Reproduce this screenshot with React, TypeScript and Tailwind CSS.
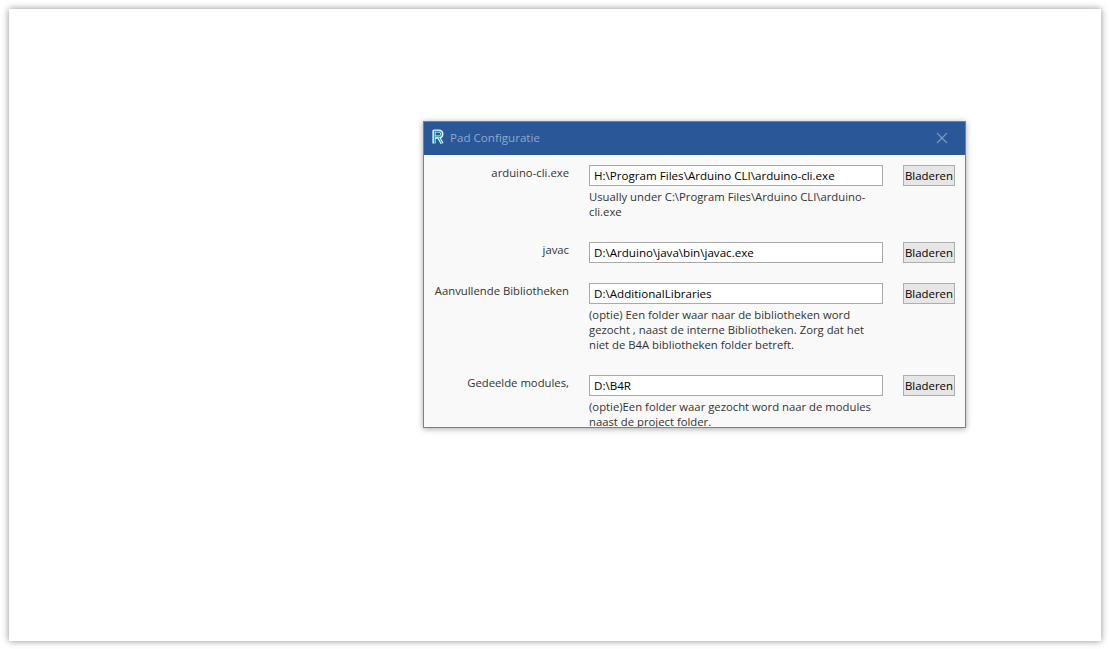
import React from 'react';

const rows = [
    {
        label: 'arduino-cli.exe',
        value: 'H:\\Program Files\\Arduino CLI\\arduino-cli.exe',
        hint: ['Usually under C:\\Program Files\\Arduino CLI\\arduino-', 'cli.exe'],
        height: 'h-[77px]',
    },
    { label: 'javac', value: 'D:\\Arduino\\java\\bin\\javac.exe', hint: [], height: 'h-[41px]' },
    {
        label: 'Aanvullende Bibliotheken',
        value: 'D:\\AdditionalLibraries',
        hint: [
            '(optie) Een folder waar naar de bibliotheken word',
            'gezocht , naast de interne Bibliotheken. Zorg dat het',
            'niet de B4A bibliotheken folder betreft.',
        ],
        height: 'h-[92px]',
    },
    {
        label: 'Gedeelde modules,',
        value: 'D:\\B4R',
        hint: ['(optie)Een folder waar gezocht word naar de modules', 'naast de project folder.'],
        height: 'h-[60px]',
    },
];

const Logo = () => (
    <svg width="14" height="18" viewBox="0 0 14 18" fill="none" className="mb-[1px]">
        <path d="M3 15.500V3h4.500c2.200 0 3.400 1.300 3.400 3.100S9.700 9.200 7.500 9.200H3M7.500 9.200l3.700 6.300" stroke="#e4f2f4" strokeWidth="3.200" strokeLinejoin="round" />
        <path d="M3.400 15.500V3.400h4.100c2 0 3 1 3 2.700s-1 2.700-3 2.700H3.400M7.800 9.500l3.300 6" stroke="#2a9db0" strokeWidth="1.100" />
    </svg>
);

export default function App() {
    return (
        <div className="h-[649px] w-[1109px] overflow-hidden bg-white p-[9px] font-['Open_Sans',sans-serif]">
            <div className="h-[632px] w-[1092px] bg-white pl-[414px] pt-[112px] shadow-[0_0_7px_rgba(0,0,0,0.45)]">
                <div className="h-[307px] w-[543px] overflow-hidden border border-[#7f7f7f] bg-[#f9f9f9] shadow-[0_1px_6px_rgba(0,0,0,0.35)]">
                    <div className="flex h-[33px] items-center bg-[#2a5798] pb-[2px] pl-[7px] pr-[18px]">
                        <Logo />
                        <span className="ml-[5px] text-[11.6px] text-[#8fa8cc]">Pad Configuratie</span>
                        <svg className="ml-auto mr-[-1px]" width="12" height="12" viewBox="0 0 12 12" stroke="#7f9ac2" strokeWidth="1.1">
                            <path d="M1 1l10 10M11 1L1 11" />
                        </svg>
                    </div>
                    <div className="flex flex-col pl-[10px] pr-[10px] pt-[10px]">
                        {rows.map((row) => (
                            <div key={row.label} className={`flex shrink-0 ${row.height}`}>
                                <div className="flex w-[135px] justify-end whitespace-nowrap text-[11.3px] leading-[16px] text-[#333]">{row.label}</div>
                                <div className="ml-[20px] w-[294px]">
                                    <div className="flex h-[21px] items-center border border-[#a9a9a9] bg-white pl-[4px] text-[11.6px] text-black">
                                        {row.value}
                                    </div>
                                    <div className="mt-[3px] text-[11.3px] leading-[15px] text-[#333]">
                                        {row.hint.map((line) => (
                                            <div key={line} className="whitespace-nowrap">{line}</div>
                                        ))}
                                    </div>
                                </div>
                                <button className="ml-[20px] h-[21px] w-[52px] border border-[#adadad] bg-[#e6e6e6] text-[11.4px] text-black">
                                    Bladeren
                                </button>
                            </div>
                        ))}
                    </div>
                </div>
            </div>
        </div>
    );
}
